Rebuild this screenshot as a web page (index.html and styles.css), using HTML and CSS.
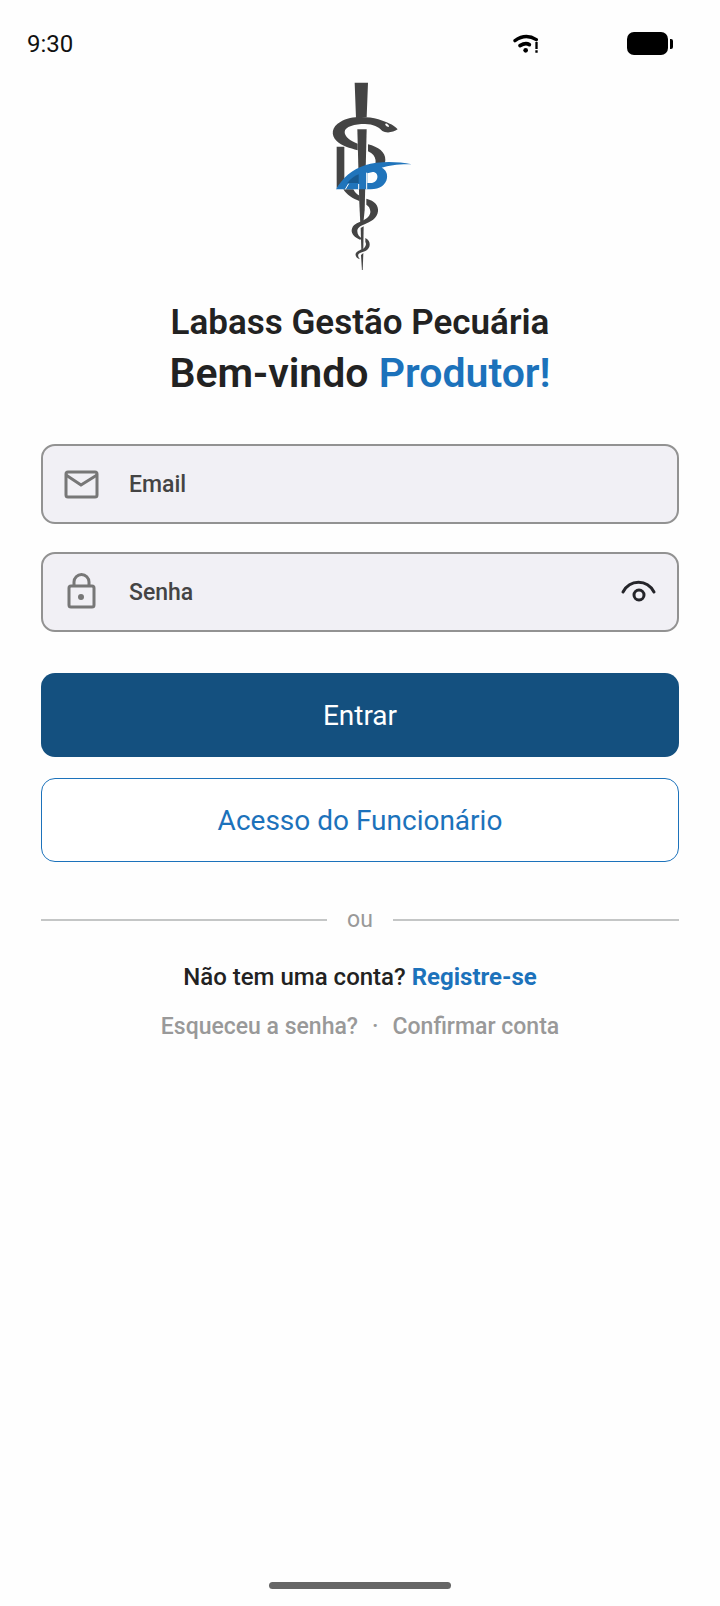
FILE: index.html
```
<!DOCTYPE html>
<html lang="pt-BR">

<head>
  <meta charset="UTF-8">
  <meta name="viewport" content="width=device-width, initial-scale=1.0">
  <title>Labass Gestão Pecuária</title>
  <link rel="stylesheet" href="styles.css">
</head>
<body>
  <header class="statusbar">
    <span class="clock">9:30</span>
    <div class="status-icons">
      <svg class="wifi" viewBox="0 0 78 60" aria-hidden="true">
        <path d="M6 20Q38 -3 70 17" fill="none" stroke="#000" stroke-width="10" stroke-linecap="round"/>
        <path d="M21 35Q38 25 49 32" fill="none" stroke="#000" stroke-width="11" stroke-linecap="round"/>
        <circle cx="38" cy="49" r="7"/>
        <path d="M67 24h7v21h-7zM67 49h7v7h-7z"/>
      </svg>
      <svg class="battery" viewBox="0 0 46 23" aria-hidden="true">
        <rect x="0" y="0" width="41" height="23" rx="7"/>
        <path d="M43 7h1q2 0 2 2v6q0 2-2 2h-1z"/>
      </svg>
    </div>
  </header>

  <main class="login">
    <svg class="logo" viewBox="-30 30 360 570" role="img" aria-label="Labass">
      <g fill="#444">
        <path d="M134 38H174L170 142Q154 141 138 144Z"/>
        <path d="M263 178C250 163 228 156 205 148C170 138 120 138 92 155C64 170 62 195 80 213C95 228 120 234 143 241V221C120 212 104 200 104 186C104 170 135 162 165 162C190 163 205 170 217 183C228 190 250 188 263 178Z"/>
        <path d="M142 178H170L164 420L160 460L151 463L148 400Z"/>
        <path d="M174 223C205 231 227 246 226 270C226 278 222 284 217 289L188 296C201 284 203 256 174 244Z"/>
        <path d="M80 230H103V330L80 355Z"/>
        <path d="M100 358C110 375 128 385 149 394V377C140 373 134 367 130 358Z"/>
        <path d="M169 386C195 392 206 408 204 424C202 446 180 456 164 463C148 469 142 475 142 484C142 494 148 500 156 506L150 509C134 502 124 492 125 480C127 464 142 459 156 453C172 446 182 436 181 424C180 414 176 408 169 404Z"/>
        <path d="M152 474L161 469L160 535L154 540Z"/>
        <path d="M166 504C178 510 181 520 178 530C174 542 160 545 150 549C143 553 142 558 150 568C139 564 134 556 138 549C142 541 156 539 163 533C169 527 169 520 166 516Z"/>
        <path d="M153 555L160 549L158 604H156Z"/>
      </g>
      <path fill="#fff" d="M231 161q-7-1-5 4q4 6 11 6q1-6-6-10z"/>
      <path fill="#2074bb" fill-rule="evenodd" d="M78 358C98 323 128 298 165 286C205 273 260 274 305 283C265 282 238 286 215 293C228 299 233 312 231 324C228 344 210 358 182 358H78ZM172 310V339H182C207 339 209 306 188 306Z"/>
      <path fill="#175990" d="M112 339C122 327 132 318 146 313V339Z"/>
      <path fill="none" stroke="#fff" stroke-width="3" d="M146 342V358M170 308V358M106 358L116 341"/>
    </svg>

    <h1 class="brand">Labass Gestão Pecuária</h1>
    <p class="welcome">Bem-vindo <span class="accent">Produtor!</span></p>

    <form class="form">
      <div class="field">
        <svg class="icon" viewBox="0 0 40 40" aria-hidden="true">
          <rect x="5" y="8" width="31" height="25" rx="2"/>
          <path d="M5 11L20 21L36 11"/>
        </svg>
        <input id="email" type="email" placeholder="Email" aria-label="Email">
      </div>
      <div class="field">
        <svg class="icon" viewBox="0 0 40 40" aria-hidden="true">
          <rect x="8" y="14" width="25" height="21" rx="2"/>
          <path d="M13 14V10a7 7 0 0 1 15 0V14"/>
          <circle class="dot" cx="20" cy="25" r="3"/>
        </svg>
        <input id="senha" type="password" placeholder="Senha" aria-label="Senha">
        <button class="eye" type="button" aria-label="Mostrar senha">
          <svg viewBox="0 0 40 40" aria-hidden="true">
            <path d="M4 20C11 7 28 7 35 20"/>
            <circle cx="20" cy="23" r="5"/>
          </svg>
        </button>
      </div>
      <button class="btn btn-primary" type="submit">Entrar</button>
      <button class="btn btn-outline" type="button">Acesso do Funcionário</button>
    </form>

    <div class="divider"><span>ou</span></div>

    <p class="register">Não tem uma conta? <a href="#registro">Registre-se</a></p>
    <nav class="links">
      <a href="#senha">Esqueceu a senha?</a>
      <span>·</span>
      <a href="#confirmar">Confirmar conta</a>
    </nav>
  </main>

  <footer class="home"><div class="home-bar"></div></footer>
</body>
</html>
```

FILE: styles.css
```
* {
  box-sizing: border-box;
}

body {
  margin: 0;
  min-height: 100vh;
  display: flex;
  flex-direction: column;
  background: #fefefe;
  color: #222;
  font-family: Roboto, sans-serif;
}

.statusbar {
  display: flex;
  align-items: center;
  justify-content: space-between;
  height: 80px;
  padding: 7px 47px 0 27px;
}

.clock {
  font-size: 24px;
  color: #111;
}

.status-icons {
  display: flex;
  align-items: center;
  gap: 88px;
}

.wifi {
  width: 26px;
  height: 20px;
}

.battery {
  width: 46px;
  height: 23px;
}

.login {
  flex: 1;
  display: flex;
  flex-direction: column;
  align-items: center;
  padding: 0 41px;
}

.logo {
  width: 120px;
  height: 190px;
}

.brand {
  margin: 33px 0 0;
  font-size: 35px;
  line-height: 40px;
  font-weight: 600;
}

.welcome {
  margin: 4px 0 0;
  font-size: 41px;
  line-height: 52px;
  font-weight: 600;
}

.accent {
  color: #1c72bb;
}

.form {
  width: 100%;
  display: flex;
  flex-direction: column;
  margin-top: 45px;
}

.field {
  display: flex;
  align-items: center;
  height: 80px;
  margin-bottom: 28px;
  padding: 0 18px;
  border: 2px solid #929292;
  border-radius: 14px;
  background: #f1f0f5;
}

.icon {
  width: 40px;
  height: 40px;
  fill: none;
  stroke: #777;
  stroke-width: 3;
}

.icon .dot {
  fill: #777;
  stroke: none;
}

.field input {
  flex: 1;
  min-width: 0;
  padding: 0;
  margin-left: 28px;
  border: none;
  outline: none;
  background: transparent;
  font-family: inherit;
  font-size: 23px;
  font-weight: 500;
  color: #444;
}

.field input::placeholder {
  color: #444;
}

.eye {
  width: 40px;
  height: 40px;
  padding: 0;
  border: none;
  background: none;
  cursor: pointer;
}

.eye svg {
  display: block;
  fill: none;
  stroke: #25252a;
  stroke-width: 3;
  stroke-linecap: round;
}

.btn {
  height: 84px;
  border-radius: 14px;
  font-family: inherit;
  font-size: 28px;
  cursor: pointer;
}

.btn-primary {
  margin-top: 13px;
  border: none;
  background: #14507f;
  color: #fff;
}

.btn-outline {
  margin-top: 21px;
  border: 1px solid #1c72bb;
  background: #fff;
  color: #1c72bb;
}

.divider {
  width: 100%;
  display: flex;
  align-items: center;
  gap: 20px;
  margin-top: 44px;
  font-size: 23px;
  line-height: 28px;
  color: #999;
}

.divider::before,
.divider::after {
  content: "";
  flex: 1;
  height: 2px;
  background: #c4c6c6;
}

.register {
  margin: 29px 0 0;
  font-size: 24px;
  line-height: 28px;
  font-weight: 500;
}

.register a {
  color: #1c72bb;
  font-weight: 700;
  text-decoration: none;
}

.links {
  display: flex;
  gap: 14px;
  margin-top: 22px;
  font-size: 23px;
  line-height: 28px;
  font-weight: 500;
  color: #999;
}

.links a {
  color: inherit;
  text-decoration: none;
}

.home {
  display: flex;
  justify-content: center;
  padding-bottom: 17px;
}

.home-bar {
  width: 182px;
  height: 7px;
  border-radius: 4px;
  background: #666;
}
```
